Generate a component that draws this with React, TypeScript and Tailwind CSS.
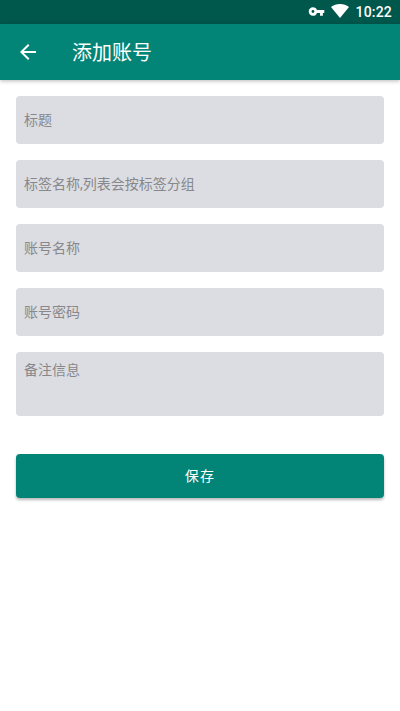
import { MdArrowBack, MdVpnKey } from "react-icons/md";

interface Field {
  name: string;
  placeholder: string;
}

const fields: Field[] = [
  { name: "title", placeholder: "标题" },
  { name: "tag", placeholder: "标签名称,列表会按标签分组" },
  { name: "account", placeholder: "账号名称" },
  { name: "password", placeholder: "账号密码" },
];

function StatusBar() {
  return (
    <div className="flex h-6 items-center justify-end bg-[#00574b] pr-2 text-white">
      <MdVpnKey className="mr-1.5 mb-px size-[17px]" />
      <svg viewBox="0 0 18 14" className="mr-1.5 mb-0.5 h-3.5 w-[18px]" fill="currentColor" aria-hidden="true">
        <path d="M9 14 0 3C2.4 1 5.5 0 9 0s6.6 1 9 3Z" />
      </svg>
      <span className="text-sm leading-6 font-medium tracking-[0.2px]">10:22</span>
    </div>
  );
}

function AppBar() {
  return (
    <header className="relative flex h-14 items-center bg-[#028577] pl-[18px] text-white shadow-[0_1px_4px_rgba(0,0,0,0.28)]">
      <button type="button" aria-label="返回" className="mr-[34px]">
        <MdArrowBack className="size-5 scale-[1.2]" />
      </button>
      <h1 className="pt-0.5 text-xl leading-7">添加账号</h1>
    </header>
  );
}

export default function App() {
  return (
    <div className="min-h-screen bg-white font-[Roboto,'Noto_Sans_CJK_SC',sans-serif]">
      <StatusBar />
      <AppBar />
      <form className="flex flex-col gap-4 p-4" onSubmit={(e) => e.preventDefault()}>
        {fields.map((field) => (
          <input
            key={field.name}
            name={field.name}
            placeholder={field.placeholder}
            className="h-12 rounded bg-[#dcdde2] px-2 text-sm text-gray-900 outline-none placeholder:text-[#88888b]"
          />
        ))}
        <textarea
          name="remark"
          placeholder="备注信息"
          className="h-16 resize-none rounded bg-[#dcdde2] p-2 text-sm text-gray-900 outline-none placeholder:text-[#88888b]"
        />
        <button
          type="submit"
          className="mt-[22px] h-11 rounded bg-[#028577] text-sm tracking-[1.2px] text-white shadow-[0_2px_3px_rgba(0,0,0,0.28)]"
        >
          保存
        </button>
      </form>
    </div>
  );
}
